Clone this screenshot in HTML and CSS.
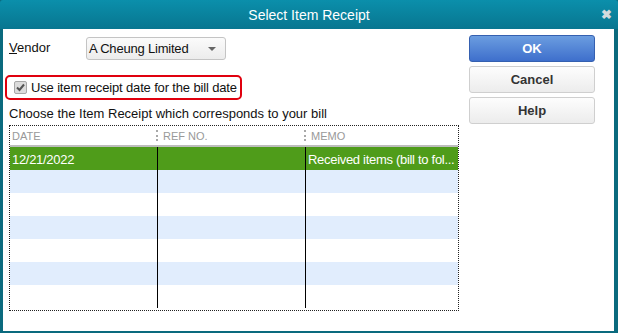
FILE: index.html
```html
<!DOCTYPE html>
<html>
<head>
    <title>Select Item Receipt</title>
    <link rel="stylesheet" href="styles.css">
</head>
<body>
    <div class="dialog">
        <header class="titlebar">
            <span class="title">Select Item Receipt</span>
            <span class="close">&#10006;</span>
        </header>
        <div class="content">
            <div class="left">
                <div class="vendor-row">
                    <label class="vendor-label"><u>V</u>endor</label>
                    <div class="select">
                        <span>A Cheung Limited</span>
                        <span class="arrow"></span>
                    </div>
                </div>
                <div class="check-row">
                    <span class="checkbox">
                        <svg width="11" height="11" viewBox="0 0 11 11"><path d="M2 5.5 L4.5 8 L9 2.5" fill="none" stroke="#555" stroke-width="2"/></svg>
                    </span>
                    <span class="check-text">Use item receipt date for the bill date</span>
                </div>
                <p class="hint">Choose the Item Receipt which corresponds to your bill</p>
                <div class="grid">
                    <div class="grid-head">
                        <div class="hcell">DATE</div>
                        <div class="hcell sep">REF NO.</div>
                        <div class="hcell sep">MEMO</div>
                    </div>
                    <div class="row selected">
                        <div class="cell">12/21/2022</div>
                        <div class="cell">&nbsp;</div>
                        <div class="cell">Received items (bill to fol...</div>
                    </div>
                    <div class="row alt"><div class="cell"></div><div class="cell"></div><div class="cell"></div></div>
                    <div class="row"><div class="cell"></div><div class="cell"></div><div class="cell"></div></div>
                    <div class="row alt"><div class="cell"></div><div class="cell"></div><div class="cell"></div></div>
                    <div class="row"><div class="cell"></div><div class="cell"></div><div class="cell"></div></div>
                    <div class="row alt"><div class="cell"></div><div class="cell"></div><div class="cell"></div></div>
                    <div class="row"><div class="cell"></div><div class="cell"></div><div class="cell"></div></div>
                </div>
            </div>
            <nav class="buttons">
                <button class="btn primary">OK</button>
                <button class="btn">Cancel</button>
                <button class="btn">Help</button>
            </nav>
        </div>
    </div>
</body>
</html>
```

FILE: styles.css
```css
* {
    box-sizing: border-box;
}

body {
    margin: 0;
    font-family: "Liberation Sans", Arial, sans-serif;
    font-size: 13px;
    color: #111;
}

.dialog {
    width: 618px;
    height: 333px;
    background: #0a6a7e;
    padding: 0 4px 2px 3px;
    display: flex;
    flex-direction: column;
}

.titlebar {
    height: 29px;
    margin: 0 -4px 0 -3px;
    background: linear-gradient(#0b8fab, #087690);
    display: flex;
    align-items: center;
    justify-content: center;
    position: relative;
    border-radius: 3px 3px 0 0;
}

.title {
    color: #fff;
    font-size: 14px;
    padding-top: 1px;
}

.close {
    position: absolute;
    right: 6px;
    top: 7px;
    color: #d2dadd;
    font-size: 13px;
    font-weight: bold;
}

.content {
    flex: 1;
    background: #fff;
    display: flex;
}

.left {
    width: 456px;
    padding: 8px 0 0 2px;
}

.vendor-row {
    display: flex;
    align-items: center;
    padding-left: 4px;
    height: 23px;
}

.vendor-label {
    width: 77px;
    margin-bottom: 3px;
}

.select {
    width: 140px;
    height: 23px;
    border: 1px solid #c4c4c4;
    border-radius: 3px;
    background: linear-gradient(#fbfbfb, #ececec);
    display: flex;
    align-items: center;
    justify-content: space-between;
    padding: 0 9px 0 2px;
    letter-spacing: -0.2px;
}

.arrow {
    width: 0;
    height: 0;
    border-left: 4px solid transparent;
    border-right: 4px solid transparent;
    border-top: 4px solid #666;
}

.check-row {
    margin-top: 15px;
    width: 237px;
    height: 25px;
    border: 2px solid #e0000e;
    border-radius: 5px;
    display: flex;
    align-items: center;
    gap: 4px;
    padding-left: 7px;
}

.check-text {
    white-space: nowrap;
    letter-spacing: -0.15px;
}

.checkbox {
    flex: none;
    width: 13px;
    height: 13px;
    border: 1px solid #a8a8a8;
    background: #dcdcdc;
    border-radius: 2px;
    display: flex;
    align-items: center;
    justify-content: center;
}

.hint {
    margin: 6px 0 0 4px;
    line-height: 15px;
}

.grid {
    margin: 4px 0 0 4px;
    width: 450px;
    height: 186px;
    border: 1px dotted #222;
    overflow: hidden;
}

.grid-head {
    display: flex;
    height: 21px;
    border-bottom: 2px solid #bdbdbd;
}

.hcell {
    color: #999;
    font-size: 11px;
    display: flex;
    align-items: center;
    padding-left: 2px;
    position: relative;
}

.hcell.sep {
    padding-left: 6px;
}

.hcell.sep::before {
    content: "";
    position: absolute;
    left: -1px;
    top: 4px;
    height: 11px;
    border-left: 2px dotted #a8a8a8;
}

.hcell:nth-child(1), .cell:nth-child(1) {
    width: 147px;
}

.hcell:nth-child(2), .cell:nth-child(2) {
    width: 148px;
}

.hcell:nth-child(3), .cell:nth-child(3) {
    flex: 1;
    min-width: 0;
}

.row {
    display: flex;
    height: 23px;
}

.row.alt {
    background: #e1edfd;
}

.row.selected {
    background: #4f9c1a;
    color: #fff;
}

.cell {
    display: flex;
    align-items: center;
    padding: 2px 0 0 2px;
    white-space: nowrap;
    letter-spacing: -0.3px;
}

.cell + .cell {
    border-left: 1px solid #000;
}

.buttons {
    display: flex;
    flex-direction: column;
    gap: 4px;
    padding: 6px 0 0 10px;
}

.btn {
    width: 126px;
    height: 27px;
    font-family: "Liberation Sans", Arial, sans-serif;
    font-size: 13px;
    font-weight: bold;
    color: #333;
    background: linear-gradient(#fdfdfd, #ececec);
    border: 1px solid #cfcfcf;
    border-radius: 3px;
}

.btn.primary {
    color: #fff;
    background: linear-gradient(#6b9de0, #3e6fcc);
    border-color: #3560b0;
}
```
